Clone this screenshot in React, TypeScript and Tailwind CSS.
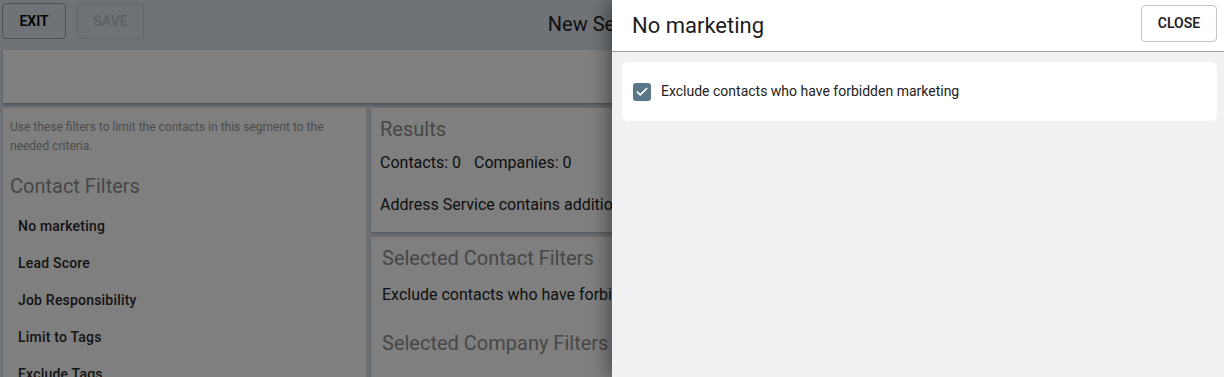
import { Check } from 'lucide-react';

const filters = ['No marketing', 'Lead Score', 'Job Responsibility', 'Limit to Tags', 'Exclude Tags'];

const SegmentEditor = () => {
  return (
    <div className="flex h-full flex-col">
      {/* top bar */}
      <div className="relative flex h-[50px] shrink-0 items-start gap-[11px] px-[2px] pt-[3px]">
        <button className="h-[36px] w-[64px] rounded border border-[#9aa0a6] text-[14px] font-semibold text-black">
          EXIT
        </button>
        <button className="h-[36px] w-[67px] rounded border border-[#c8ced4] text-[14px] font-semibold text-[#bcc2c8]">
          SAVE
        </button>
        <div className="absolute left-0 right-[4px] top-[9px] text-center text-[20px] text-[#222]">New Segment</div>
      </div>

      {/* toolbar strip */}
      <div className="mx-[3px] h-[53px] shrink-0 bg-white shadow-[0_2px_3px_rgba(0,0,0,0.3)]" />

      <div className="mt-[5px] flex flex-1 gap-[5px] px-[3px]">
        {/* left filters */}
        <div className="w-[363px] shrink-0 bg-white px-[7px] pt-[10px] shadow-[0_1px_2px_rgba(0,0,0,0.2)]">
          <p className="text-[12px] leading-[18.5px] text-[#9a9a9a]">
            Use these filters to limit the contacts in this segment to the needed criteria.
          </p>
          <h2 className="mt-[18px] text-[20px] leading-[26px] text-[#8e8e8e]">Contact Filters</h2>
          <ul className="mt-[18px] flex flex-col gap-[19px] pl-[8px]">
            {filters.map((f) => (
              <li key={f} className="text-[14px] font-medium leading-[18px] tracking-[0.2px] text-[#2a2a2a]">
                {f}
              </li>
            ))}
          </ul>
        </div>

        {/* results column */}
        <div className="flex flex-1 flex-col gap-[5px]">
          <div className="h-[124px] bg-white px-[9px] pt-[9px] shadow-[0_1px_3px_rgba(0,0,0,0.3)]">
            <h2 className="text-[20px] leading-[24px] text-[#8e8e8e]">Results</h2>
            <div className="mt-[12px] flex gap-[13px] text-[16px] leading-[20px] text-[#222]">
              <span>Contacts: 0</span>
              <span>Companies: 0</span>
            </div>
            <p className="mt-[22px] text-[16px] leading-[20px] text-[#222]">
              Address Service contains additional contacts that match these filters.
            </p>
          </div>
          <div className="flex-1 bg-white px-[11px] pt-[9px] shadow-[0_1px_3px_rgba(0,0,0,0.3)]">
            <h2 className="text-[20px] leading-[24px] text-[#8e8e8e]">Selected Contact Filters</h2>
            <p className="mt-[15px] text-[16px] leading-[20px] text-[#222]">
              Exclude contacts who have forbidden marketing
            </p>
            <h2 className="mt-[26px] text-[20px] leading-[24px] text-[#8e8e8e]">Selected Company Filters</h2>
          </div>
        </div>
      </div>
    </div>
  );
};

const App = () => {
  return (
    <div className="relative h-[377px] w-[1224px] overflow-hidden bg-[#dee6ee] font-['Roboto',sans-serif]">
      <SegmentEditor />

      {/* backdrop */}
      <div className="absolute inset-0 bg-black/50" />

      {/* drawer */}
      <div className="absolute bottom-0 right-0 top-0 flex w-[612px] flex-col bg-[#f0f1f3] shadow-[-6px_0_16px_rgba(0,0,0,0.35)]">
        <div className="flex h-[52px] shrink-0 items-center justify-between border-b border-[#9e9e9e] bg-white pl-[20px] pr-[7px]">
          <h1 className="text-[22px] text-[#1d1d1d]">No marketing</h1>
          <button className="mb-[5px] h-[37px] w-[76px] rounded border border-[#c4c4c4] bg-white text-[14px] font-semibold text-[#222]">
            CLOSE
          </button>
        </div>
        <div className="ml-[10px] mr-[7px] mt-[10px] flex h-[59px] items-center gap-[10px] rounded-md bg-white px-[11px]">
          <span className="flex h-[18px] w-[18px] items-center justify-center rounded-[3px] bg-[#587787]">
            <Check className="h-[14px] w-[14px] text-white" strokeWidth={3} />
          </span>
          <span className="text-[14px] text-[#222]">Exclude contacts who have forbidden marketing</span>
        </div>
      </div>
    </div>
  );
};

export default App;
